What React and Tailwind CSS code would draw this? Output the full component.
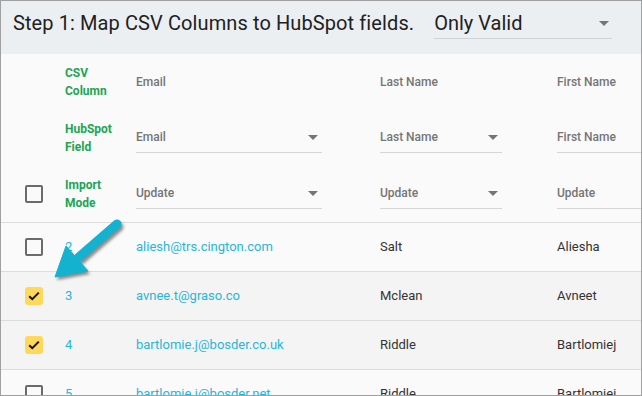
import React from 'react';

const rows = [
  { id: 2, email: 'aliesh@trs.cington.com', last: 'Salt', first: 'Aliesha', checked: false },
  { id: 3, email: 'avnee.t@graso.co', last: 'Mclean', first: 'Avneet', checked: true },
  { id: 4, email: 'bartlomie.j@bosder.co.uk', last: 'Riddle', first: 'Bartlomiej', checked: true },
  { id: 5, email: 'bartlomie.j@bosder.net', last: 'Riddle', first: 'Bartlomiej', checked: false },
];

function Caret({ className = '' }) {
  return (
    <svg width="10" height="5" viewBox="0 0 10 5" className={className}>
      <path d="M0 0 L10 0 L5 5 Z" fill="#757575" />
    </svg>
  );
}

function Select({ value, width }) {
  return (
    <div className={`flex items-center justify-between h-[30px] border-b border-[#d6d6d6] pr-[4px] ${width}`}>
      <span className="text-[12px] font-medium text-[#757575]">{value}</span>
      <Caret />
    </div>
  );
}

function Checkbox({ checked }) {
  if (checked) {
    return (
      <div className="w-[18px] h-[18px] rounded-[3px] bg-[#fdd85b] flex items-center justify-center">
        <svg width="12" height="10" viewBox="0 0 12 10">
          <path d="M1.2 5.2 L4.3 8.2 L10.8 1.6" fill="none" stroke="#111" strokeWidth="2" />
        </svg>
      </div>
    );
  }
  return <div className="w-[18px] h-[18px] rounded-[2px] border-2 border-[#6b6b6b]" />;
}

function Label({ top, bottom }) {
  return (
    <div className="text-[12px] font-bold leading-[18px] text-[#21a453]">
      <div>{top}</div>
      <div>{bottom}</div>
    </div>
  );
}

export default function App() {
  return (
    <div
      className="relative w-[642px] h-[396px] overflow-hidden border border-[#a0a0a0] bg-[#fafafa]"
      style={{ fontFamily: 'Roboto, "Liberation Sans", sans-serif' }}
    >
      {/* Header */}
      <div className="h-[53px] bg-[#eceff1] flex items-center pl-[12px]">
        <h1 className="text-[20px] tracking-[0.1px] text-[#212121] mb-[9px]">
          Step 1: Map CSV Columns to HubSpot fields.
        </h1>
        <div className="ml-[20px] w-[178px] h-[30px] mb-[8px] flex items-center justify-between border-b border-[#cfd2d4] pr-[3px]">
          <span className="text-[20px] text-[#212121]">Only Valid</span>
          <Caret />
        </div>
      </div>

      {/* Mapping rows */}
      <div className="grid grid-cols-[64px_71px_244px_177px_1fr]">
        {/* CSV Column */}
        <div className="h-[56px]" />
        <div className="h-[56px] flex items-center"><Label top="CSV" bottom="Column" /></div>
        <div className="h-[56px] flex items-center text-[12px] font-medium text-[#757575]">Email</div>
        <div className="h-[56px] flex items-center text-[12px] font-medium text-[#757575]">Last Name</div>
        <div className="h-[56px] flex items-center text-[12px] font-medium text-[#757575]">First Name</div>

        {/* HubSpot Field */}
        <div className="h-[56px]" />
        <div className="h-[56px] flex items-center"><Label top="HubSpot" bottom="Field" /></div>
        <div className="h-[56px] flex items-center pb-[1px]"><Select value="Email" width="w-[186px]" /></div>
        <div className="h-[56px] flex items-center pb-[1px]"><Select value="Last Name" width="w-[122px]" /></div>
        <div className="h-[56px] flex items-center pb-[1px]"><Select value="First Name" width="w-[200px]" /></div>

        {/* Import Mode */}
        <div className="h-[56px] flex items-center pl-[24px]"><Checkbox checked={false} /></div>
        <div className="h-[56px] flex items-center"><Label top="Import" bottom="Mode" /></div>
        <div className="h-[56px] flex items-center pb-[1px]"><Select value="Update" width="w-[186px]" /></div>
        <div className="h-[56px] flex items-center pb-[1px]"><Select value="Update" width="w-[122px]" /></div>
        <div className="h-[56px] flex items-center pb-[1px]"><Select value="Update" width="w-[200px]" /></div>
      </div>

      {/* Data rows */}
      <div className="border-t border-[#dcdcdc]">
        {rows.map((r) => (
          <div
            key={r.id}
            className={`grid grid-cols-[64px_71px_244px_177px_1fr] h-[49px] items-center border-b border-[#dcdcdc] text-[13px] ${r.checked ? 'bg-[#f4f4f4]' : 'bg-[#fafafa]'}`}
          >
            <div className="pl-[24px]"><Checkbox checked={r.checked} /></div>
            <div className="text-[#29b6d6]">{r.id}</div>
            <div className="text-[#29b6d6]">{r.email}</div>
            <div className="text-[#333]">{r.last}</div>
            <div className="text-[#333]">{r.first}</div>
          </div>
        ))}
      </div>

      {/* Annotation arrow */}
      <svg className="absolute inset-0 pointer-events-none" width="642" height="396" viewBox="0 0 642 396">
        <defs>
          <filter id="sh" x="-50%" y="-50%" width="200%" height="200%">
            <feGaussianBlur stdDeviation="1.6" />
          </filter>
        </defs>
        <g transform="translate(2 3)" filter="url(#sh)" opacity="0.55">
          <line x1="116" y1="223" x2="78" y2="256" stroke="#333" strokeWidth="9" strokeLinecap="round" />
          <polygon points="54,276 65,245 87,270" fill="#333" />
        </g>
        <line x1="116" y1="223" x2="78" y2="256" stroke="#13b3cf" strokeWidth="9" strokeLinecap="round" />
        <polygon points="54,276 65,245 87,270" fill="#13b3cf" strokeLinejoin="round" stroke="#13b3cf" strokeWidth="1" />
      </svg>
    </div>
  );
}
